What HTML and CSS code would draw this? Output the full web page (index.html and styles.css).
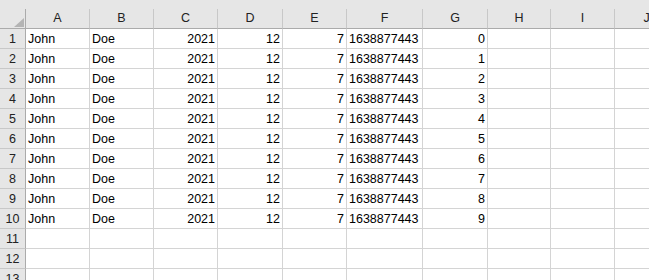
FILE: index.html
```html
<!DOCTYPE html>
<html>
<head>
<meta charset="utf-8">
<link rel="stylesheet" href="styles.css">
</head>
<body>
<div class="sheet">
  <div class="topbar"></div>
  <div class="grid">
    <div class="corner"><svg class="tri" width="26" height="20" viewBox="0 0 26 20"><polygon points="24,9 24,18 14,18" fill="#b4b4b4"/></svg></div>
    <div class="h">A</div><div class="h">B</div><div class="h">C</div><div class="h">D</div><div class="h">E</div><div class="h">F</div><div class="h">G</div><div class="h">H</div><div class="h">I</div><div class="h">J</div>

    <div class="r">1</div><div class="c">John</div><div class="c">Doe</div><div class="c n">2021</div><div class="c n">12</div><div class="c n">7</div><div class="c">1638877443</div><div class="c n">0</div><div class="c"></div><div class="c"></div><div class="c"></div>
    <div class="r">2</div><div class="c">John</div><div class="c">Doe</div><div class="c n">2021</div><div class="c n">12</div><div class="c n">7</div><div class="c">1638877443</div><div class="c n">1</div><div class="c"></div><div class="c"></div><div class="c"></div>
    <div class="r">3</div><div class="c">John</div><div class="c">Doe</div><div class="c n">2021</div><div class="c n">12</div><div class="c n">7</div><div class="c">1638877443</div><div class="c n">2</div><div class="c"></div><div class="c"></div><div class="c"></div>
    <div class="r">4</div><div class="c">John</div><div class="c">Doe</div><div class="c n">2021</div><div class="c n">12</div><div class="c n">7</div><div class="c">1638877443</div><div class="c n">3</div><div class="c"></div><div class="c"></div><div class="c"></div>
    <div class="r">5</div><div class="c">John</div><div class="c">Doe</div><div class="c n">2021</div><div class="c n">12</div><div class="c n">7</div><div class="c">1638877443</div><div class="c n">4</div><div class="c"></div><div class="c"></div><div class="c"></div>
    <div class="r">6</div><div class="c">John</div><div class="c">Doe</div><div class="c n">2021</div><div class="c n">12</div><div class="c n">7</div><div class="c">1638877443</div><div class="c n">5</div><div class="c"></div><div class="c"></div><div class="c"></div>
    <div class="r">7</div><div class="c">John</div><div class="c">Doe</div><div class="c n">2021</div><div class="c n">12</div><div class="c n">7</div><div class="c">1638877443</div><div class="c n">6</div><div class="c"></div><div class="c"></div><div class="c"></div>
    <div class="r">8</div><div class="c">John</div><div class="c">Doe</div><div class="c n">2021</div><div class="c n">12</div><div class="c n">7</div><div class="c">1638877443</div><div class="c n">7</div><div class="c"></div><div class="c"></div><div class="c"></div>
    <div class="r">9</div><div class="c">John</div><div class="c">Doe</div><div class="c n">2021</div><div class="c n">12</div><div class="c n">7</div><div class="c">1638877443</div><div class="c n">8</div><div class="c"></div><div class="c"></div><div class="c"></div>
    <div class="r">10</div><div class="c">John</div><div class="c">Doe</div><div class="c n">2021</div><div class="c n">12</div><div class="c n">7</div><div class="c">1638877443</div><div class="c n">9</div><div class="c"></div><div class="c"></div><div class="c"></div>
    <div class="r">11</div><div class="c"></div><div class="c"></div><div class="c"></div><div class="c"></div><div class="c"></div><div class="c"></div><div class="c"></div><div class="c"></div><div class="c"></div><div class="c"></div>
    <div class="r">12</div><div class="c"></div><div class="c"></div><div class="c"></div><div class="c"></div><div class="c"></div><div class="c"></div><div class="c"></div><div class="c"></div><div class="c"></div><div class="c"></div>
    <div class="r">13</div><div class="c"></div><div class="c"></div><div class="c"></div><div class="c"></div><div class="c"></div><div class="c"></div><div class="c"></div><div class="c"></div><div class="c"></div><div class="c"></div>
  </div>
</div>
</body>
</html>
```

FILE: styles.css
```css
html, body {
  margin: 0;
  padding: 0;
  background: #ffffff;
  overflow: hidden;
}
.sheet {
  width: 649px;
  height: 280px;
  overflow: hidden;
  font-family: "Liberation Sans", Arial, sans-serif;
  font-size: 12.5px;
  color: #000;
}
.topbar {
  height: 9px;
  background: #e6e6e6;
}
.grid {
  display: grid;
  grid-template-columns: 26px 64px 64px 64px 65px 64px 76px 65px 63px 64px 64px;
  grid-template-rows: 20px repeat(13, 20px);
  width: 679px;
}
.grid > div {
  box-sizing: border-box;
  white-space: nowrap;
  overflow: hidden;
}
.corner {
  background: #e6e6e6;
  border-right: 1px solid #ababab;
  border-bottom: 1px solid #ababab;
}
.tri {
  display: block;
}
.h {
  background: #e6e6e6;
  border-right: 1px solid #c8c8c8;
  border-bottom: 1px solid #ababab;
  text-align: center;
  line-height: 19px;
  color: #222;
}
.r {
  background: #e6e6e6;
  border-right: 1px solid #ababab;
  border-bottom: 1px solid #c8c8c8;
  text-align: center;
  line-height: 19px;
  padding-top: 1px;
  color: #222;
}
.c {
  border-right: 1px solid #d4d4d4;
  border-bottom: 1px solid #d4d4d4;
  line-height: 19px;
  padding: 1px 2px 0 2px;
}
.n {
  text-align: right;
}
```
